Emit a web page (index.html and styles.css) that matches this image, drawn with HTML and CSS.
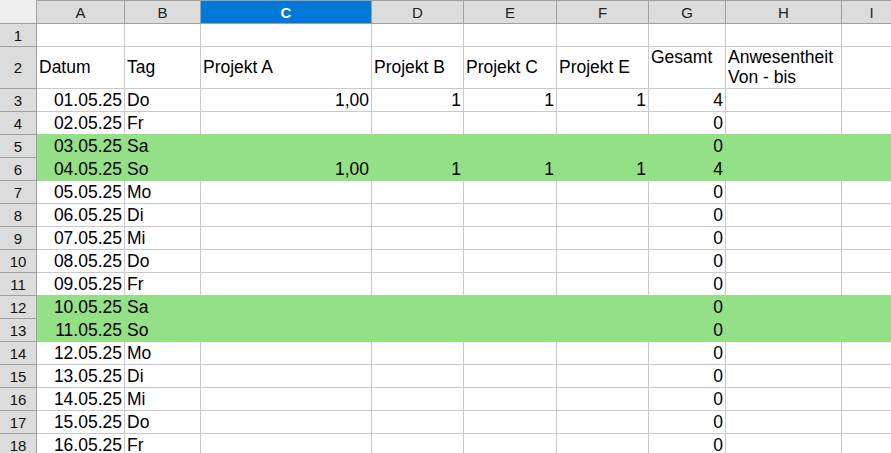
FILE: index.html
```html
<!DOCTYPE html>
<html lang="de">
<head>
  <meta charset="UTF-8">
  <title>Zeiterfassung Mai</title>
  <link rel="stylesheet" href="styles.css">
</head>
<body>
  <div class="sheet" id="sheet">
    <div class="corner"></div>
    <div class="ch">A</div>
    <div class="ch">B</div>
    <div class="ch sel">C</div>
    <div class="ch">D</div>
    <div class="ch">E</div>
    <div class="ch">F</div>
    <div class="ch">G</div>
    <div class="ch">H</div>
    <div class="ch">I</div>

    <div class="rh">1</div>
    <div class="c"></div><div class="c"></div><div class="c"></div><div class="c"></div><div class="c"></div>
    <div class="c"></div><div class="c"></div><div class="c"></div><div class="c"></div>

    <div class="rh">2</div>
    <div class="c">Datum</div>
    <div class="c">Tag</div>
    <div class="c">Projekt A</div>
    <div class="c">Projekt B</div>
    <div class="c">Projekt C</div>
    <div class="c">Projekt E</div>
    <div class="c top">Gesamt</div>
    <div class="c top wrap">Anwesentheit Von - bis</div>
    <div class="c"></div>
  </div>

  <script>
    const days = [
      ['01.05.25', 'Do', 4], ['02.05.25', 'Fr', 0], ['03.05.25', 'Sa', 0],
      ['04.05.25', 'So', 4], ['05.05.25', 'Mo', 0], ['06.05.25', 'Di', 0],
      ['07.05.25', 'Mi', 0], ['08.05.25', 'Do', 0], ['09.05.25', 'Fr', 0],
      ['10.05.25', 'Sa', 0], ['11.05.25', 'So', 0], ['12.05.25', 'Mo', 0],
      ['13.05.25', 'Di', 0], ['14.05.25', 'Mi', 0], ['15.05.25', 'Do', 0],
      ['16.05.25', 'Fr', 0]
    ];

    const sheet = document.getElementById('sheet');
    let html = '';
    days.forEach((d, i) => {
      const weekend = d[1] === 'Sa' || d[1] === 'So';
      const cls = weekend ? 'c wk' : 'c';
      const filled = d[2] > 0;
      html += `<div class="rh">${i + 3}</div>`;
      html += `<div class="${cls} num">${d[0]}</div>`;
      html += `<div class="${cls}">${d[1]}</div>`;
      html += `<div class="${cls} num">${filled ? '1,00' : ''}</div>`;
      html += `<div class="${cls} num">${filled ? '1' : ''}</div>`;
      html += `<div class="${cls} num">${filled ? '1' : ''}</div>`;
      html += `<div class="${cls} num">${filled ? '1' : ''}</div>`;
      html += `<div class="${cls} num">${d[2]}</div>`;
      html += `<div class="${cls}"></div>`;
      html += `<div class="${cls}"></div>`;
    });
    sheet.insertAdjacentHTML('beforeend', html);
  </script>
</body>
</html>
```

FILE: styles.css
```css
body {
  margin: 0;
  background: #fff;
  font-family: "Liberation Sans", Arial, sans-serif;
  color: #000;
  overflow: hidden;
}
.sheet {
  display: grid;
  grid-template-columns: 37px 88px 76px 171px 92px 93px 92px 77px 116px 60px;
  grid-template-rows: 24px 23px 42px repeat(16, 23px);
  width: 902px;
}
.sheet > div {
  box-sizing: border-box;
  display: flex;
  align-items: center;
  white-space: nowrap;
  overflow: hidden;
}
.corner {
  background: #efefef;
  border-right: 1px solid #a0a0a0;
  border-bottom: 1px solid #a0a0a0;
}
.ch {
  background: #dcdcdc;
  border-top: 1px solid #a0a0a0;
  border-right: 1px solid #a0a0a0;
  border-bottom: 1px solid #a0a0a0;
  justify-content: center;
  font-size: 15px;
  color: #222;
}
.ch.sel {
  background: #0078d7;
  color: #fff;
  font-weight: bold;
}
.rh {
  background: #dcdcdc;
  border-right: 1px solid #a0a0a0;
  border-bottom: 1px solid #a0a0a0;
  justify-content: center;
  font-size: 15px;
  color: #111;
}
.c {
  border-right: 1px solid #c9c9c9;
  border-bottom: 1px solid #c9c9c9;
  padding: 0 2px;
  font-size: 17.5px;
}
.num {
  justify-content: flex-end;
}
.top {
  align-items: flex-start !important;
  line-height: 20px;
}
.wrap {
  white-space: normal !important;
  width: 116px;
}
.wk {
  background: #94e086;
  border-color: #94e086;
  box-shadow: 0 -1px 0 #94e086;
}
```
